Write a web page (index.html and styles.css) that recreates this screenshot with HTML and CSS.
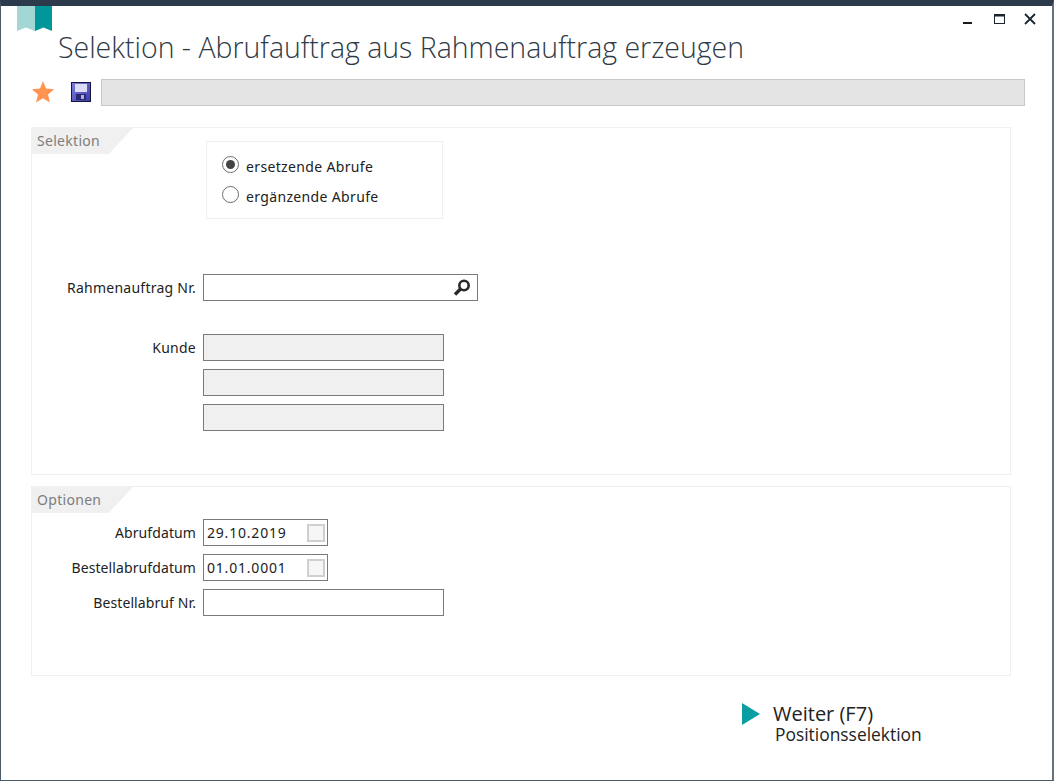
FILE: index.html
```html
<!DOCTYPE html>
<html lang="de">
<head>
<meta charset="utf-8">
<title>Selektion - Abrufauftrag aus Rahmenauftrag erzeugen</title>
<link rel="stylesheet" href="styles.css">
</head>
<body>
<div class="window">
  <svg class="bookmark" width="36" height="26" viewBox="0 0 36 26"><path d="M0 0H18V25L9 21.500L0 25Z" fill="#a3d7d5"/><path d="M18 0H35V25L26.500 21.500L18 25Z" fill="#00979a"/></svg>
  <div class="winctl">
    <svg width="12" height="12" viewBox="0 0 12 12"><rect x="1" y="9" width="9" height="2" fill="#1a1a1a"/></svg>
    <svg width="12" height="12" viewBox="0 0 12 12"><rect x="1.500" y="1.500" width="10" height="9" fill="none" stroke="#1a2530"/><rect x="1" y="1" width="11" height="2.500" fill="#1a2530"/></svg>
    <svg width="12" height="12" viewBox="0 0 12 12"><path d="M1 1L11 11M11 1L1 11" stroke="#1a2530" stroke-width="1.800" fill="none"/></svg>
  </div>
  <h1 class="title">Selektion - Abrufauftrag aus Rahmenauftrag erzeugen</h1>
  <div class="toolbar">
    <svg width="24" height="24" viewBox="0 0 24 24"><path d="M12 1L15 8.500L23 9.200L17 14.400L18.900 22.500L12 18.200L5.100 22.500L7 14.400L1 9.200L9 8.500Z" fill="#ff934f"/></svg>
    <svg class="save" width="20" height="20" viewBox="0 0 20 20"><defs><linearGradient id="disk" x1="0" y1="0" x2="1" y2="1"><stop offset="0" stop-color="#7c7ce0"/><stop offset="1" stop-color="#3c3ca8"/></linearGradient></defs><rect x="0.500" y="0.500" width="19" height="19" fill="url(#disk)" stroke="#14143c"/><rect x="4" y="2" width="12" height="8" fill="#dcdcf4"/><rect x="5" y="12" width="10" height="6" fill="#2a2a70"/><rect x="10" y="13" width="3" height="4" fill="#b0b0d8"/></svg>
    <div class="statusbar"></div>
  </div>
  <section class="panel panel-sel">
    <div class="tab">Selektion</div>
    <div class="radiobox">
      <label class="radio"><span class="dot on"></span>ersetzende Abrufe</label>
      <label class="radio"><span class="dot"></span>ergänzende Abrufe</label>
    </div>
    <div class="row row-ra"><span class="lbl">Rahmenauftrag Nr.</span>
      <div class="field field-search"><svg width="18" height="18" viewBox="0 0 18 18"><circle cx="11" cy="6.500" r="4.700" fill="none" stroke="#2a2a2a" stroke-width="2.600"/><path d="M7.500 10L2 15.500" stroke="#2a2a2a" stroke-width="3.400" fill="none"/></svg></div>
    </div>
    <div class="row row-kunde"><span class="lbl">Kunde</span><div class="field field-ro"></div></div>
    <div class="row row-ro"><span class="lbl"></span><div class="field field-ro"></div></div>
    <div class="row row-ro"><span class="lbl"></span><div class="field field-ro"></div></div>
  </section>
  <section class="panel panel-opt">
    <div class="tab">Optionen</div>
    <div class="row row-date"><span class="lbl">Abrufdatum</span><div class="field field-date">29.10.2019<span class="check"></span></div></div>
    <div class="row row-next"><span class="lbl">Bestellabrufdatum</span><div class="field field-date">01.01.0001<span class="check"></span></div></div>
    <div class="row row-next"><span class="lbl">Bestellabruf Nr.</span><div class="field field-wide"></div></div>
  </section>
  <div class="next">
    <svg width="20" height="24" viewBox="0 0 20 24"><path d="M1 1L19 12L1 23Z" fill="#0a9ea3"/></svg>
    <div class="next-text"><div class="next-main">Weiter (F7)</div><div class="next-sub">Positionsselektion</div></div>
  </div>
</div>
</body>
</html>
```
FILE: styles.css
```css
* { box-sizing: border-box; }
html, body { margin: 0; height: 100%; background: #fff; }
body { font-family: "Noto Sans", "Open Sans", sans-serif; color: #222; overflow: hidden; }
.window {
  position: relative;
  width: 1054px; height: 781px;
  border-top: 6px solid #2b3b4b;
  border-left: 1px solid #4a5a68;
  border-right: 2px solid #66727c;
  border-bottom: 1px solid #4a5a68;
  padding: 0 0 0 30px;
  background: #fff;
}
.bookmark { position: absolute; left: 16px; top: 0; }
.winctl { position: absolute; right: 16px; top: 7px; display: flex; gap: 19px; }
.title {
  margin: 0; padding: 20px 0 0 27px;
  font: 300 28.470px/42px "Open Sans", sans-serif;
  color: #2e3a46; height: 64px;
  white-space: nowrap;
}
.toolbar { display: flex; align-items: center; height: 28px; margin: 8px 0 0 0; }
.toolbar svg:first-child { flex: none; }
.save { margin-left: 16px; flex: none; }
.statusbar {
  width: 924px; height: 27px; margin-left: 10px;
  background: #e4e4e4; border: 1px solid #c6c6c6;
}
.panel { width: 980px; border: 1px solid #f0f0f0; position: relative; }
.panel-sel { height: 348px; margin-top: 21px; padding-top: 13px; }
.panel-opt { height: 190px; margin-top: 11px; padding-top: 32px; }
.tab {
  position: absolute; left: 0; top: 0;
  width: 101px; height: 26px; padding: 3px 0 0 5px;
  font-size: 14px; line-height: 20px; letter-spacing: 0.300px; color: #7d7d7d;
  background: #f0f0f0;
  clip-path: polygon(0 0, 100% 0, 76% 100%, 0 100%);
}
.radiobox {
  width: 237px; height: 78px; margin-left: 174px;
  border: 1px solid #f0f0f0; padding: 14px 0 0 15px;
  display: flex; flex-direction: column; gap: 9px;
}
.radio { display: flex; align-items: center; gap: 7px; font-size: 14px; line-height: 20px; letter-spacing: 0.350px; }
.dot { width: 17px; height: 17px; margin-bottom: 4px; border: 1.500px solid #6e6e6e; border-radius: 50%; background: #fff; position: relative; }
.dot.on::after { content: ""; position: absolute; left: 2.500px; top: 2.500px; width: 9px; height: 9px; border-radius: 50%; background: #444; }
.row { display: flex; align-items: center; font-size: 14px; line-height: 20px; letter-spacing: 0.250px; }
.panel-opt .lbl { letter-spacing: 0.100px; }
.lbl { width: 164px; text-align: right; flex: none; }
.field { margin-left: 7px; height: 27px; border: 1px solid #7a7a7a; background: #fff; flex: none; }
.row-ra { margin-top: 55px; }
.row-ra .field { width: 275px; }
.row-kunde { margin-top: 33px; }
.row-ro { margin-top: 8px; }
.field-ro { width: 241px; background: #f0f0f0; }
.field-search { display: flex; align-items: center; justify-content: flex-end; padding-right: 6px; }
.field-date { width: 125px; display: flex; align-items: center; justify-content: space-between; padding: 0 2px 0 3px; letter-spacing: 0.800px; }
.field-wide { width: 241px; }
.check { width: 18px; height: 18px; border: 2px solid #cfcfcf; background: #f6f6f6; }
.row-next { margin-top: 8px; }
.next { position: absolute; left: 740px; top: 696px; display: flex; align-items: flex-start; gap: 12px; }
.next-text { padding-top: 1px; }
.next-main { font: 400 20px/21px "Open Sans", sans-serif; color: #222; }
.next-sub { font: 400 17.400px/20px "Open Sans", sans-serif; margin-left: 2px; }
```
